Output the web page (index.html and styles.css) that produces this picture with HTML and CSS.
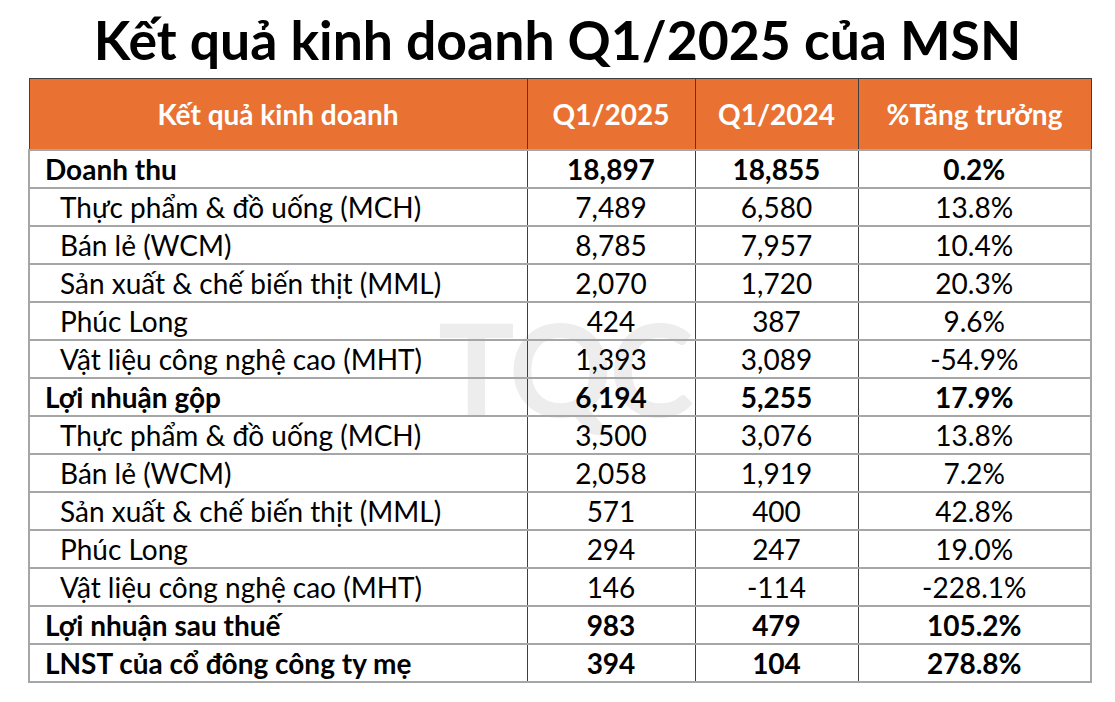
FILE: index.html
```html
<!DOCTYPE html>
<html lang="vi">
<head>
<meta charset="utf-8">
<title>Kết quả kinh doanh Q1/2025 của MSN</title>
<link rel="stylesheet" href="styles.css">
</head>
<body>
<main class="page">
  <h1 class="title">Kết quả kinh doanh Q1/2025 của MSN</h1>
  <div class="table-wrap">
    <div class="watermark" aria-hidden="true">TQC</div>
    <table class="results">
      <colgroup>
        <col class="c-name"><col class="c-q25"><col class="c-q24"><col class="c-pct">
      </colgroup>
      <thead>
        <tr>
          <th>Kết quả kinh doanh</th>
          <th>Q1/2025</th>
          <th>Q1/2024</th>
          <th>%Tăng trưởng</th>
        </tr>
      </thead>
      <tbody>
        <tr class="main"><td class="name">Doanh thu</td><td>18,897</td><td>18,855</td><td>0.2%</td></tr>
        <tr class="sub"><td class="name">Thực phẩm &amp; đồ uống (MCH)</td><td>7,489</td><td>6,580</td><td>13.8%</td></tr>
        <tr class="sub"><td class="name">Bán lẻ (WCM)</td><td>8,785</td><td>7,957</td><td>10.4%</td></tr>
        <tr class="sub"><td class="name">Sản xuất &amp; chế biến thịt (MML)</td><td>2,070</td><td>1,720</td><td>20.3%</td></tr>
        <tr class="sub"><td class="name">Phúc Long</td><td>424</td><td>387</td><td>9.6%</td></tr>
        <tr class="sub"><td class="name">Vật liệu công nghệ cao (MHT)</td><td>1,393</td><td>3,089</td><td>-54.9%</td></tr>
        <tr class="main"><td class="name">Lợi nhuận gộp</td><td>6,194</td><td>5,255</td><td>17.9%</td></tr>
        <tr class="sub"><td class="name">Thực phẩm &amp; đồ uống (MCH)</td><td>3,500</td><td>3,076</td><td>13.8%</td></tr>
        <tr class="sub"><td class="name">Bán lẻ (WCM)</td><td>2,058</td><td>1,919</td><td>7.2%</td></tr>
        <tr class="sub"><td class="name">Sản xuất &amp; chế biến thịt (MML)</td><td>571</td><td>400</td><td>42.8%</td></tr>
        <tr class="sub"><td class="name">Phúc Long</td><td>294</td><td>247</td><td>19.0%</td></tr>
        <tr class="sub"><td class="name">Vật liệu công nghệ cao (MHT)</td><td>146</td><td>-114</td><td>-228.1%</td></tr>
        <tr class="main"><td class="name">Lợi nhuận sau thuế</td><td>983</td><td>479</td><td>105.2%</td></tr>
        <tr class="main"><td class="name">LNST của cổ đông công ty mẹ</td><td>394</td><td>104</td><td>278.8%</td></tr>
      </tbody>
    </table>
  </div>
</main>
</body>
</html>
```

FILE: styles.css
```css
* { box-sizing: border-box; }

html, body {
  margin: 0;
  padding: 0;
  background: #ffffff;
}

body {
  font-family: Lato, "Noto Sans", "Liberation Sans", sans-serif;
  color: #000000;
}

.page {
  width: 1115px;
  height: 702px;
  padding-top: 7px;
  display: flex;
  flex-direction: column;
  align-items: center;
}

.title {
  margin: 0 0 7px 0;
  font-size: 53.5px;
  line-height: 64px;
  font-weight: 700;
  text-align: center;
  color: #000;
  letter-spacing: 0;
}

.table-wrap {
  position: relative;
  width: 1062px;
  margin-left: 3px;
}

.watermark {
  position: absolute;
  left: 410px;
  top: 226px;
  font-size: 128px;
  line-height: 128px;
  font-weight: 700;
  color: #ededed;
  letter-spacing: -3px;
  z-index: 0;
  pointer-events: none;
  user-select: none;
}

.results {
  position: relative;
  z-index: 1;
  width: 1062px;
  border-collapse: collapse;
  table-layout: fixed;
  background: transparent;
}

.c-name { width: 498px; }
.c-q25 { width: 168px; }
.c-q24 { width: 163px; }
.c-pct { width: 233px; }

.results th {
  background: #e97132;
  color: #ffffff;
  font-size: 28px;
  font-weight: 700;
  height: 71px;
  padding: 0;
  text-align: center;
  vertical-align: middle;
  border: 1px solid #3f3f3f;
}

.results td {
  font-size: 28px;
  height: 38px;
  padding: 0;
  line-height: 32px;
  text-align: center;
  vertical-align: middle;
  border-top: 2px solid #a6a6a6;
  border-bottom: 2px solid #a6a6a6;
  border-left: 1px solid #3f3f3f;
  border-right: 1px solid #3f3f3f;
}

.results td:first-child { border-left: 2px solid #a6a6a6; }
.results td:last-child { border-right: 2px solid #a6a6a6; }

.results td.name { text-align: left; }

.results tr.main td { font-weight: 700; }
.results tr.main td.name { padding-left: 15px; }
.results tr.sub td.name { padding-left: 30px; }
```
